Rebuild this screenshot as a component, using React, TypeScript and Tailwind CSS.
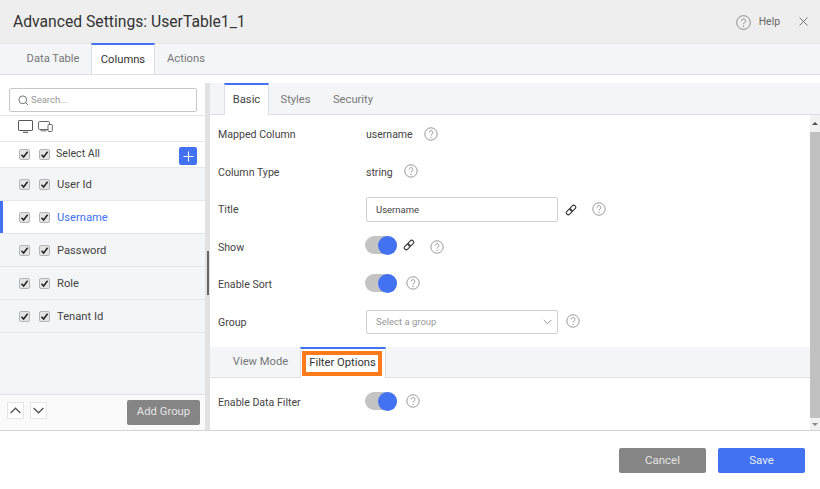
import React from "react";

const font = { fontFamily: "Roboto, 'Liberation Sans', sans-serif" };

function Help({ className = "" }: { className?: string }) {
  return (
    <svg width="14" height="14" viewBox="0 0 14 14" fill="none" className={"shrink-0 " + className}>
      <circle cx="7" cy="7" r="6.2" stroke="#8c8c8c" strokeWidth="0.9" />
      <path d="M5.2 5.5a1.85 1.85 0 1 1 2.9 1.5c-.7.5-1.1.8-1.1 1.6" stroke="#8c8c8c" strokeWidth="0.9" fill="none" />
      <circle cx="7" cy="10.4" r="0.6" fill="#8c8c8c" />
    </svg>
  );
}

function LinkIcon() {
  return (
    <svg width="12" height="12" viewBox="0 0 12 12" fill="none" className="shrink-0">
      <g transform="rotate(-45 6 6)" stroke="#333" strokeWidth="1.1">
        <rect x="0.2" y="4" width="6.4" height="4" rx="2" />
        <rect x="5.4" y="4" width="6.4" height="4" rx="2" />
      </g>
    </svg>
  );
}

function Toggle() {
  return (
    <div className="relative -ml-px w-[32px] h-[18px] rounded-full bg-[#c4c4c4] shrink-0">
      <div className="absolute right-0 top-0 w-[19px] h-[19px] rounded-full bg-[#4272f2]" />
    </div>
  );
}

function Check() {
  return (
    <div className="w-[11px] h-[11px] rounded-[2px] bg-[#e4e4e4] border border-[#b5b5b5] flex items-center justify-center shrink-0">
      <svg width="9" height="9" viewBox="0 0 9 9" fill="none">
        <path d="M1.5 4.8 3.6 7 7.6 1.8" stroke="#222" strokeWidth="1.5" />
      </svg>
    </div>
  );
}

function ColRow({ label, active = false }: { label: string; active?: boolean }) {
  return (
    <div
      className={
        "relative h-[33px] flex items-center border-b border-[#e3e6ea] pl-[19px] " +
        (active ? "bg-white" : "bg-[#f4f5f7]")
      }
    >
      {active && <div className="absolute left-0 top-0 bottom-0 w-[3px] bg-[#4272f2]" />}
      <Check />
      <div className="w-[9px]" />
      <Check />
      <span className={"ml-[7px] mt-[2px] text-[11.2px] " + (active ? "text-[#4272f2]" : "text-[#444]")}>{label}</span>
    </div>
  );
}

function FormRow({ label, children }: { label: string; children: React.ReactNode }) {
  return (
    <div className="h-[37.5px] flex items-center pl-[8px] shrink-0">
      <span className="w-[148px] text-[10.6px] text-[#444] shrink-0 mt-px">{label}</span>
      {children}
    </div>
  );
}

export default function App() {
  return (
    <div style={font} className="w-[820px] h-[489px] bg-white flex flex-col overflow-hidden">
      <div className="h-[44px] bg-[#eeeeee] border-b border-[#e6e6e6] flex items-center pl-[13px] pr-[12px] shrink-0">
        <span className="text-[15.7px] text-[#333] flex-1">Advanced Settings: UserTable1_1</span>
        <svg width="15" height="15" viewBox="0 0 14 14" fill="none" className="mr-[8px] mt-[1px]">
          <circle cx="7" cy="7" r="6.4" stroke="#808080" strokeWidth="0.8" />
          <path d="M5.2 5.5a1.85 1.85 0 1 1 2.9 1.5c-.7.5-1.1.8-1.1 1.6" stroke="#808080" strokeWidth="0.8" />
          <circle cx="7" cy="10.4" r="0.6" fill="#808080" />
        </svg>
        <span className="text-[10.4px] text-[#666] mr-[19px] mt-[1px]">Help</span>
        <svg width="9" height="9" viewBox="0 0 9 9" fill="none" className="-mt-[1px]">
          <path d="M.5.5l8 8M8.5.5l-8 8" stroke="#666" strokeWidth="0.9" />
        </svg>
      </div>

      <div className="h-[31px] bg-[#f3f5f7] border-b border-[#dcdfe3] flex pl-[15px] shrink-0 text-[11.2px]">
        <div className="w-[76px] flex items-center justify-center text-[#777] pt-px">Data Table</div>
        <div className="w-[64px] h-[31px] -mt-px bg-white border-t-2 border-x border-t-[#4272f2] border-x-[#dcdfe3] flex items-center justify-center text-[#333] pt-px">
          Columns
        </div>
        <div className="w-[62px] flex items-center justify-center text-[#777] pt-px">Actions</div>
      </div>

      <div className="h-[8px] bg-white shrink-0" />

      <div className="flex-1 min-h-0 flex border-b border-[#d4d4d4]">
        <div className="w-[205px] shrink-0 flex flex-col bg-[#f4f5f7]">
          <div className="bg-white h-[33px] pt-[5px] pl-[9px] pr-[8px] border-b border-[#e3e6ea] shrink-0">
            <div className="h-[24px] border border-[#c9c9c9] rounded-[2px] flex items-center pl-[8px] bg-white">
              <svg width="11" height="11" viewBox="0 0 11 11" fill="none">
                <circle cx="4.8" cy="4.8" r="3.9" stroke="#666" strokeWidth="0.9" />
                <path d="M7.7 7.7 10.2 10.2" stroke="#666" strokeWidth="0.9" />
              </svg>
              <span className="ml-[2px] text-[9.5px] text-[#999]">Search...</span>
            </div>
          </div>
          <div className="bg-white h-[26px] flex items-center pl-[18px] border-b border-[#e3e6ea] shrink-0">
            <svg width="15" height="13" viewBox="0 0 15 13" fill="none" className="-mt-[4px]">
              <rect x="0.5" y="0.5" width="14" height="10" rx="0.6" stroke="#444" strokeWidth="0.9" />
              <path d="M5 12.3h5" stroke="#444" strokeWidth="1" />
            </svg>
            <svg width="15" height="11" viewBox="0 0 15 11" fill="none" className="ml-[5px] -mt-[5px]">
              <rect x="0.5" y="0.5" width="11" height="8" rx="1.2" stroke="#444" strokeWidth="0.8" />
              <path d="M2.5 9.8h6" stroke="#444" strokeWidth="0.8" />
              <rect x="10" y="3.5" width="4.3" height="7" rx="0.8" fill="#fff" stroke="#444" strokeWidth="0.8" />
            </svg>
          </div>
          <div className="relative bg-white h-[26px] flex items-center pl-[19px] border-b border-[#e3e6ea] shrink-0">
            <Check />
            <div className="w-[9px]" />
            <Check />
            <span className="ml-[6px] text-[10.6px] text-[#444] -mt-[1px]">Select All</span>
            <div className="absolute left-[179px] top-[5px] w-[18px] h-[18px] rounded-[2px] bg-[#4272f2] flex items-center justify-center">
              <svg width="11" height="11" viewBox="0 0 11 11" fill="none">
                <path d="M5.5 .5v10M.5 5.5h10" stroke="#fff" strokeWidth="1.1" />
              </svg>
            </div>
          </div>
          <ColRow label="User Id" />
          <ColRow label="Username" active />
          <ColRow label="Password" />
          <ColRow label="Role" />
          <ColRow label="Tenant Id" />
          <div className="flex-1" />
          <div className="h-[36px] bg-[#fafafa] border-t border-[#dfe1e4] flex items-center pl-[7px] pr-[5px] shrink-0">
            <div className="w-[17px] h-[17px] bg-white border border-[#e6e6e6] flex items-center justify-center mr-[6px] -mt-[4px]">
              <svg width="11" height="7" viewBox="0 0 11 7" fill="none">
                <path d="M.6 6 5.5 1.2 10.4 6" stroke="#555" strokeWidth="1.3" />
              </svg>
            </div>
            <div className="w-[17px] h-[17px] bg-white border border-[#e6e6e6] flex items-center justify-center -mt-[4px]">
              <svg width="11" height="7" viewBox="0 0 11 7" fill="none">
                <path d="M.6 1 5.5 5.8 10.4 1" stroke="#555" strokeWidth="1.3" />
              </svg>
            </div>
            <div className="ml-auto w-[73px] h-[25px] rounded-[2px] bg-[#858585] text-[#e4e4e4] text-[11.3px] flex items-center justify-center">
              Add Group
            </div>
          </div>
        </div>

        <div className="relative w-[5px] shrink-0 bg-[#e2e2e2]">
          <div className="absolute left-[2px] top-[168px] w-[2px] h-[44px] bg-[#666]" />
        </div>

        <div className="flex-1 min-w-0 flex flex-col">
          <div className="h-[32px] bg-[#f3f5f7] border-b border-[#dcdfe3] flex pl-[14px] text-[11.2px] shrink-0">
            <div className="w-[45px] h-[32px] bg-white border-t-2 border-x border-t-[#4272f2] border-x-[#dcdfe3] flex items-center justify-center text-[#444]">
              Basic
            </div>
            <div className="w-[53px] flex items-center justify-center text-[#777] pt-[3px]">Styles</div>
            <div className="w-[62px] flex items-center justify-center text-[#777] pt-[3px]">Security</div>
          </div>

          <div className="flex-1 min-h-0 flex">
            <div className="flex-1 min-w-0 flex flex-col pt-[1px]">
              <FormRow label="Mapped Column">
                <span className="text-[10.5px] text-[#444]">username</span>
                <Help className="ml-[11px] -mt-[2px]" />
              </FormRow>
              <FormRow label="Column Type">
                <span className="text-[10.5px] text-[#444] mt-px">string</span>
                <Help className="ml-[11px] -mt-[2px]" />
              </FormRow>
              <FormRow label="Title">
                <div className="w-[192px] h-[25px] border border-[#cfcfcf] rounded-[2px] flex items-center pl-[9px] text-[9.5px] text-[#444]">
                  Username
                </div>
                <div className="ml-[7px]"><LinkIcon /></div>
                <Help className="ml-[15px] -mt-[2px]" />
              </FormRow>
              <FormRow label="Show">
                <div className="-mt-[4px] flex items-center">
                  <Toggle />
                  <div className="ml-[6px]"><LinkIcon /></div>
                  <Help className="ml-[15px] mt-[3px]" />
                </div>
              </FormRow>
              <FormRow label="Enable Sort">
                <div className="-mt-[4px] flex items-center">
                  <Toggle />
                  <Help className="ml-[9px]" />
                </div>
              </FormRow>
              <FormRow label="Group">
                <div className="w-[192px] h-[24px] border border-[#cfcfcf] rounded-[2px] flex items-center justify-between pl-[9px] pr-[5px] text-[9.5px] text-[#999]">
                  Select a group
                  <svg width="9" height="6" viewBox="0 0 9 6" fill="none">
                    <path d="M.7 1 4.5 4.8 8.3 1" stroke="#888" strokeWidth="0.9" />
                  </svg>
                </div>
                <Help className="ml-[8px] -mt-[2px]" />
              </FormRow>

              <div className="mt-[6px] h-[31px] bg-[#f3f5f7] border-b border-[#dfe1e4] flex pl-[11px] text-[11.2px] shrink-0">
                <div className="w-[79px] flex items-center justify-center text-[#777] pt-px">View Mode</div>
                <div className="relative w-[86px] h-[31px] bg-white border-t-2 border-x border-t-[#4272f2] border-x-[#dcdfe3] flex items-center justify-center text-[#333]">
                  <span className="-ml-[1px]">Filter Options</span>
                  <div className="absolute left-[1px] top-[2px] w-[80px] h-[25px] border-[4px] border-[#ff7a1a]" />
                </div>
              </div>

              <div className="mt-[6px]">
                <FormRow label="Enable Data Filter">
                  <div className="-mt-[4px] flex items-center">
                    <Toggle />
                    <Help className="ml-[9px]" />
                  </div>
                </FormRow>
              </div>
            </div>

            <div className="w-[10px] shrink-0 bg-[#f1f1f1] flex flex-col">
              <div className="h-[17px] flex items-center justify-center shrink-0">
                <div className="w-0 h-0 border-x-[3px] border-x-transparent border-b-[3px] border-b-[#505050]" />
              </div>
              <div className="flex-1 bg-[#c1c1c1]" />
              <div className="h-[12px] flex items-center justify-center shrink-0">
                <div className="w-0 h-0 border-x-[3px] border-x-transparent border-t-[3px] border-t-[#888]" />
              </div>
            </div>
          </div>
        </div>
      </div>

      <div className="h-[58px] shrink-0 bg-white flex items-start justify-end pt-[17px] pr-[15px] text-[11.5px]">
        <div className="w-[87px] h-[25px] rounded-[2px] bg-[#858585] text-[#e4e4e4] flex items-center justify-center mr-[12px]">
          Cancel
        </div>
        <div className="w-[87px] h-[25px] rounded-[2px] bg-[#4272f2] text-[#e8eeff] flex items-center justify-center">
          Save
        </div>
      </div>
    </div>
  );
}
